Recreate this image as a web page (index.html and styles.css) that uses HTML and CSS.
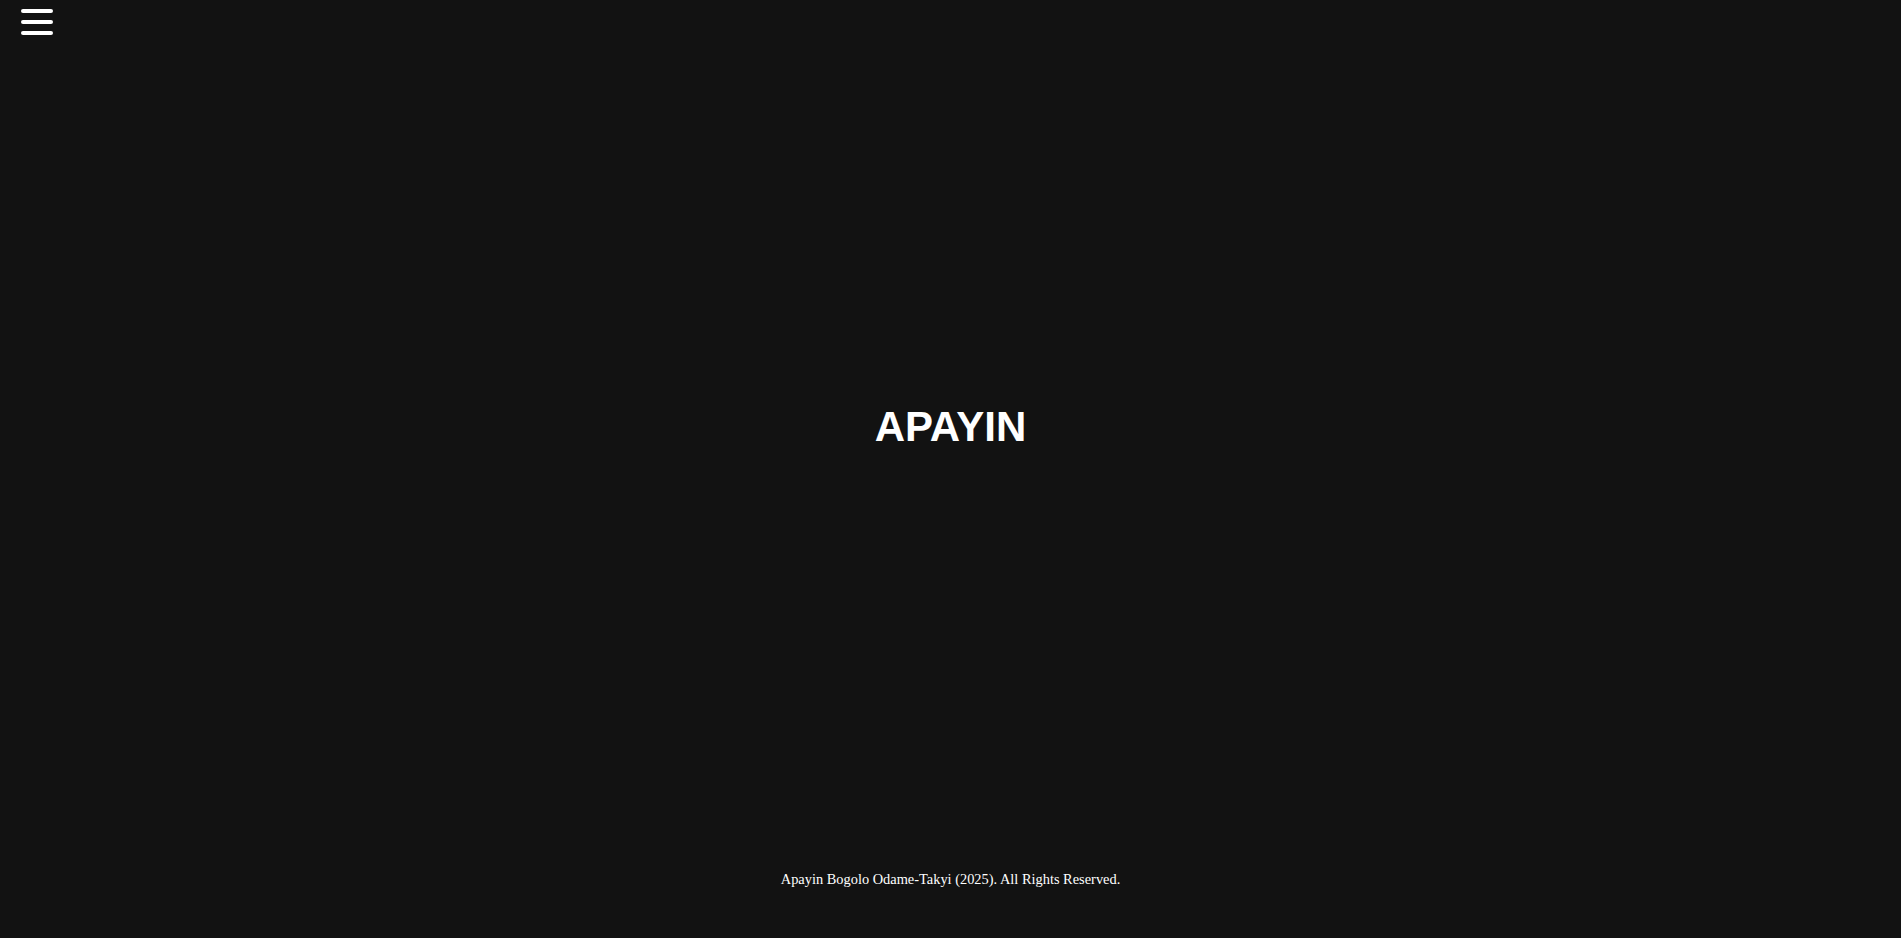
FILE: index.html
```html
<!DOCTYPE html>
<html lang="en">
<head>
<meta charset="utf-8">
<title>APAYIN</title>
<link rel="stylesheet" href="styles.css">
</head>
<body>
<div class="page">
  <header class="topbar">
    <button class="menu-btn" aria-label="Menu">
      <span class="bar"></span>
      <span class="bar"></span>
      <span class="bar"></span>
    </button>
  </header>
  <main class="hero">
    <h1 class="title">APAYIN</h1>
  </main>
  <footer class="footer">
    <p class="copy">Apayin Bogolo Odame-Takyi (2025). All Rights Reserved.</p>
  </footer>
</div>
</body>
</html>
```

FILE: styles.css
```css
html, body {
  margin: 0;
  padding: 0;
  background: #121212;
}
.page {
  min-height: 100vh;
  display: flex;
  flex-direction: column;
  color: #ffffff;
}
.topbar {
  height: 46px;
  display: flex;
  align-items: flex-start;
}
.menu-btn {
  margin: 9px 0 0 21px;
  padding: 0;
  border: 0;
  background: transparent;
  display: flex;
  flex-direction: column;
  gap: 7px;
  cursor: pointer;
}
.bar {
  display: block;
  width: 32px;
  height: 4px;
  border-radius: 2px;
  background: #ffffff;
}
.hero {
  flex: 1;
  display: flex;
  align-items: center;
  justify-content: center;
}
.title {
  margin: 0;
  font-family: "Liberation Sans", Arial, sans-serif;
  font-weight: 700;
  font-size: 42px;
  color: #ffffff;
}
.footer {
  padding: 63px 0 50px;
  text-align: center;
}
.copy {
  margin: 0;
  font-family: "Liberation Serif", "Times New Roman", serif;
  font-size: 14.4px;
  color: #ffffff;
}
```
